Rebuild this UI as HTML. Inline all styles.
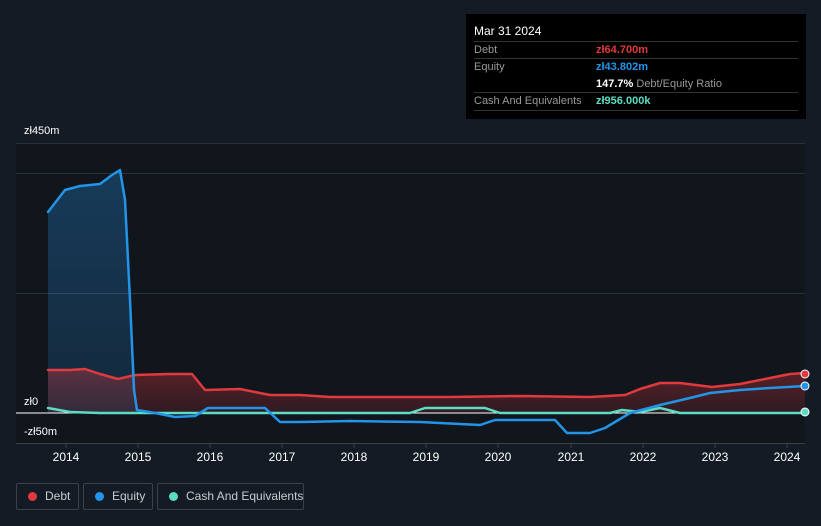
<!DOCTYPE html>
<html><head><style>
body{margin:0;width:821px;height:526px;background:#151b25;font-family:"Liberation Sans",sans-serif;overflow:hidden;position:relative}
.tt{position:absolute;left:466px;top:14px;width:340px;height:105px;background:#000;color:#fff;font-size:11px;z-index:2}
.row{position:absolute;left:8px;width:324px;border-top:1px solid #333}
.lbl{position:absolute;left:0;color:#999;white-space:nowrap}
.val{position:absolute;left:122px;font-weight:bold;white-space:nowrap}
.leg{position:absolute;top:483px;height:27px;border:1px solid #3a414c;border-radius:2px;color:#c8ccd2;font-size:12px;line-height:25px;box-sizing:border-box;white-space:nowrap;z-index:2}
.leg i{position:absolute;top:8px;width:9px;height:9px;border-radius:50%}
.ax{position:absolute;color:#fff;font-size:11px;z-index:2}
svg{z-index:1}
</style></head><body>
<div class="tt">
<div style="position:absolute;left:8px;top:10px;font-size:12px">Mar 31 2024</div>
<div class="row" style="top:27px"><span class="lbl" style="top:2px">Debt</span><span class="val" style="top:2px;color:#e0393e">zł64.700m</span></div>
<div class="row" style="top:44px"><span class="lbl" style="top:2px">Equity</span><span class="val" style="top:2px;color:#2394e8">zł43.802m</span><span class="val" style="top:19px;color:#fff">147.7% <span style="color:#999;font-weight:normal">Debt/Equity Ratio</span></span></div>
<div class="row" style="top:78px"><span class="lbl" style="top:2px">Cash And Equivalents</span><span class="val" style="top:2px;color:#5ddcc4">zł956.000k</span></div>
<div class="row" style="top:96px"></div>
</div>
<div class="ax" style="left:24px;top:125px">zł450m</div>
<div class="ax" style="left:24px;top:396px">zł0</div>
<div class="ax" style="left:24px;top:426px">-zł50m</div>
<svg width="821" height="526" style="position:absolute;left:0;top:0">
<defs><linearGradient id="r" x1="0" y1="0" x2="0" y2="1"><stop offset="0" stop-color="#e0393e" stop-opacity=".35"/><stop offset="1" stop-color="#e0393e" stop-opacity=".15"/></linearGradient>
<linearGradient id="b" x1="0" y1="0" x2="0" y2="1"><stop offset="0" stop-color="#2394e8" stop-opacity=".3"/><stop offset="1" stop-color="#2394e8" stop-opacity=".15"/></linearGradient></defs>
<rect x="16" y="143" width="789" height="300" fill="#11151c"/>
<g stroke="#2a303a" stroke-width="1"><line x1="16" y1="143.5" x2="805" y2="143.5"/><line x1="16" y1="173.5" x2="805" y2="173.5"/><line x1="16" y1="293.5" x2="805" y2="293.5"/></g>
<path d="M48,212 L48,413 L137,413 L130,300 L125,200 L120,170 L112,175 L100,184 L80,186 L65,190 Z" fill="url(#b)"/>
<path d="M48,370 L70,370 L85,369 L100,374 L118,379 L135,375 L170,374 L192,374 L205,390 L240,389 L255,392 L270,395 L300,395 L330,397 L380,397 L450,397 L520,396 L590,397 L625,395 L640,389 L660,383 L680,383 L712,387 L740,384 L770,378 L790,374 L805,373 L805,413 L48,413 Z" fill="url(#r)"/>
<line x1="16" y1="413" x2="805" y2="413" stroke="#fff" stroke-width="1"/>
<line x1="16" y1="443.5" x2="805" y2="443.5" stroke="#3a414c"/>
<g stroke="#3a414c"><line x1="66" y1="443" x2="66" y2="448"/><line x1="138" y1="443" x2="138" y2="448"/><line x1="210" y1="443" x2="210" y2="448"/><line x1="282" y1="443" x2="282" y2="448"/><line x1="354" y1="443" x2="354" y2="448"/><line x1="426" y1="443" x2="426" y2="448"/><line x1="498" y1="443" x2="498" y2="448"/><line x1="571" y1="443" x2="571" y2="448"/><line x1="643" y1="443" x2="643" y2="448"/><line x1="715" y1="443" x2="715" y2="448"/><line x1="787" y1="443" x2="787" y2="448"/></g>
<g stroke-linejoin="round" stroke-linecap="round">
<path d="M48,408 L70,412 L100,413 L410,413 L425,408 L485,408 L500,413 L610,413 L622,410 L640,412 L660,408 L680,413 L805,413" fill="none" stroke="#5ddcc4" stroke-width="2.5"/>
<path d="M48,370 L70,370 L85,369 L100,374 L118,379 L135,375 L170,374 L192,374 L205,390 L240,389 L255,392 L270,395 L300,395 L330,397 L380,397 L450,397 L520,396 L590,397 L625,395 L640,389 L660,383 L680,383 L712,387 L740,384 L770,378 L790,374 L805,373" fill="none" stroke="#e0393e" stroke-width="2.5"/>
<path d="M48,212 L65,190 L80,186 L100,184 L112,175 L120,170 L125,200 L130,300 L134,390 L137,410 L155,413 L175,417 L195,416 L208,408 L265,408 L280,422 L300,422 L350,421 L420,422 L480,425 L495,420 L555,420 L567,433 L590,433 L605,428 L630,413 L660,405 L690,398 L710,393 L740,390 L770,388 L805,386" fill="none" stroke="#2394e8" stroke-width="2.5"/>
</g>
<circle cx="805" cy="374" r="4" fill="#e0393e" stroke="#fff"/>
<circle cx="805" cy="386" r="4" fill="#2394e8" stroke="#fff"/>
<circle cx="805" cy="412" r="4" fill="#5ddcc4" stroke="#fff"/>
<g fill="#fff" font-size="12" font-family="Liberation Sans" text-anchor="middle"><text x="66" y="461">2014</text><text x="138" y="461">2015</text><text x="210" y="461">2016</text><text x="282" y="461">2017</text><text x="354" y="461">2018</text><text x="426" y="461">2019</text><text x="498" y="461">2020</text><text x="571" y="461">2021</text><text x="643" y="461">2022</text><text x="715" y="461">2023</text><text x="787" y="461">2024</text></g>
</svg>
<div class="leg" style="left:16px;width:63px"><i style="left:11px;background:#e0393e"></i><span style="position:absolute;left:28px">Debt</span></div>
<div class="leg" style="left:83px;width:70px"><i style="left:11px;background:#2394e8"></i><span style="position:absolute;left:28px">Equity</span></div>
<div class="leg" style="left:157px;width:147px"><i style="left:11px;background:#5ddcc4"></i><span style="position:absolute;left:28px">Cash And Equivalents</span></div>
</body></html>
